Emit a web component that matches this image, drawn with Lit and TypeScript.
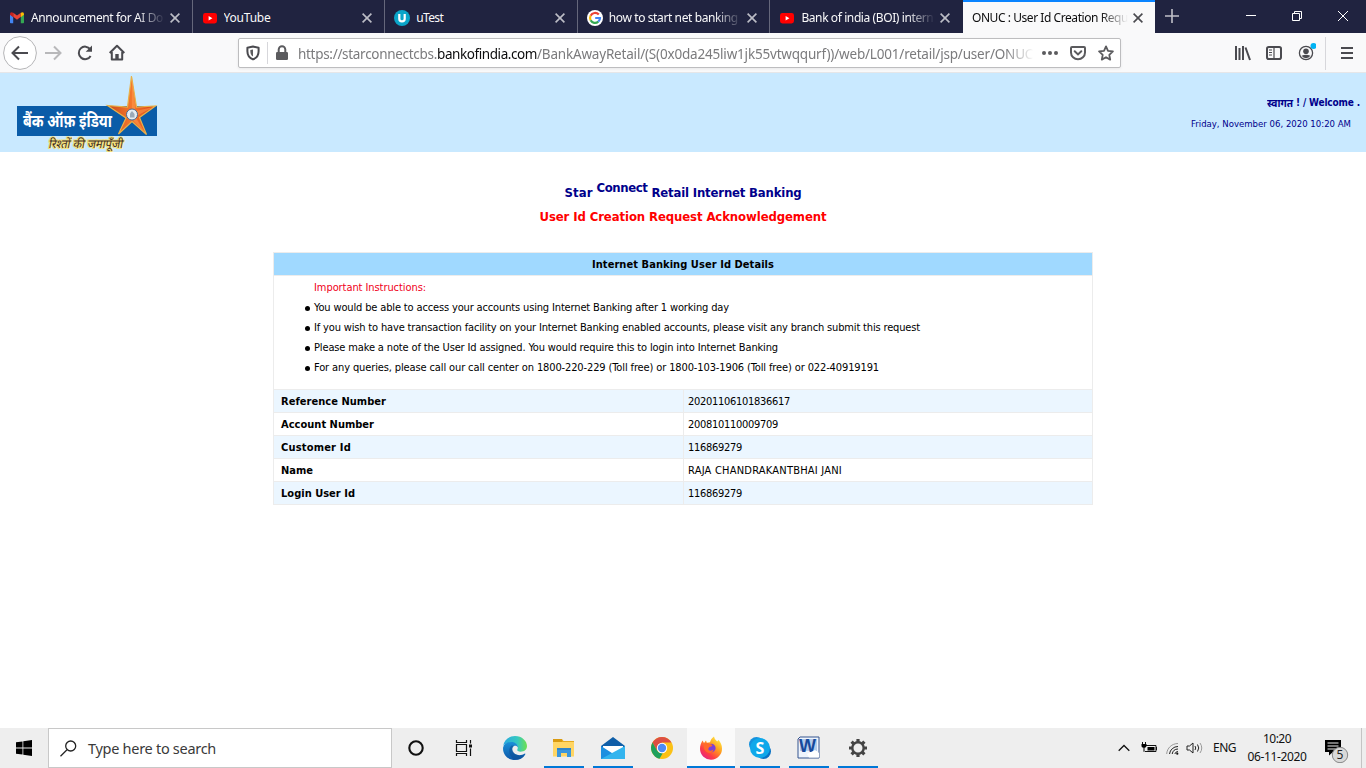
import { LitElement, html, svg, css } from "lit";
import { customElement, property } from "lit/decorators.js";
import { classMap } from "lit/directives/class-map.js";

/** One line of text, tracked so that it fills the given width. */
@customElement("fit-text")
class FitText extends LitElement {
  @property() text = "";
  @property({ type: Number }) w = 0;
  static styles = css`
    :host { display: block; white-space: pre; flex: none; }
    span { display: inline-block; }
  `;
  render() {
    return html`<span>${this.text}</span>`;
  }
  updated() {
    const s = this.renderRoot.querySelector("span") as HTMLElement;
    s.style.letterSpacing = "0px";
    const natural = s.getBoundingClientRect().width;
    const n = Math.max(1, this.text.length);
    s.style.letterSpacing = `${(this.w - natural) / n}px`;
  }
}

const fit = (text: string, w: number, cls = "") =>
  html`<fit-text class=${cls} .text=${text} .w=${w}></fit-text>`;

const youtube = svg`<rect x="1" y="3" width="14" height="10.5" rx="2.4" fill="#f00"/><path d="M6.6 6v4.6l3.8-2.3z" fill="#fff"/>`;
const gmail = svg`<path d="M1 13.2V4.4l3.2 2.4v6.4H1.8q-.8 0-.8-.8z" fill="#4285f4"/><path d="M11.8 13.2V6.8L15 4.4v8q0 .8-.8.8z" fill="#34a853"/><path d="M4.2 6.8v-4L8 5.6l3.8-2.8v4L8 9.8z" fill="#ea4335"/><path d="M11.8 2.8q3.2-1.6 3.2 1.4v.6l-3.2 2.4z" fill="#fbbc04"/><path d="M4.2 2.8Q1 1.2 1 4.2v.6l3.2 2.4z" fill="#c5221f"/>`;
const utest = svg`<circle cx="8" cy="8" r="8" fill="#0ba5c9"/><path d="M5.3 4v4.7a2.7 2.7 0 0 0 5.4 0V4" fill="none" stroke="#fff" stroke-width="2.2"/>`;
const google = svg`<circle cx="8" cy="8" r="8" fill="#fff"/><g fill="none" stroke-width="2.2"><path d="M11.8 4.6A5 5 0 0 0 3.6 5.7" stroke="#ea4335"/><path d="M3.6 5.7a5 5 0 0 0 0 4.6" stroke="#fbbc05"/><path d="M3.6 10.3a5 5 0 0 0 7.7 1.4" stroke="#34a853"/><path d="M11.3 11.7A5 5 0 0 0 13 8H8.2" stroke="#4285f4"/></g>`;

const tabs = [
  { t: "Announcement for AI Do", w: 132, icon: gmail, fade: true },
  { t: "YouTube", w: 47, icon: youtube },
  { t: "uTest", w: 27, icon: utest },
  { t: "how to start net banking", w: 129, icon: google, fade: true },
  { t: "Bank of india (BOI) intern", w: 132, icon: youtube, fade: true },
  { t: "ONUC : User Id Creation Requ", w: 156, active: true, fade: true },
];

@customElement("browser-tabs")
class BrowserTabs extends LitElement {
  static styles = css`
    :host { display: flex; height: 33px; background: #202340; color: #f9f9fa; font: 12px/16px "Noto Sans", "Open Sans", sans-serif; }
    .tab { box-sizing: border-box; display: flex; align-items: center; width: 192.6px; padding: 2px 9px 0 9px; border-right: 1px solid #65677b; }
    .tab.pre { border-right-color: #202340; }
    .tab.active { width: 192px; background: #f9f9fa; color: #0c0c0d; border: 0; box-shadow: inset 0 2px #0a84ff; }
    .ico { width: 16px; height: 16px; margin-right: 6px; flex: none; }
    .label { flex: 1; min-width: 0; overflow: hidden; }
    .fade { -webkit-mask-image: linear-gradient(to left, transparent 2px, #000 30px); mask-image: linear-gradient(to left, transparent 2px, #000 30px); }
    .x { width: 10px; height: 10px; margin: 0 3px 0 3px; flex: none; stroke: #bcbdc6; stroke-width: 1.6; }
    .active .x { stroke: #4a4a4f; }
    .plus { width: 14px; height: 14px; margin: 9px 0 0 10px; stroke: #c0c0c8; stroke-width: 1.6; }
    .win { display: flex; margin-left: auto; padding: 10px 17px 0 0; gap: 34px; }
    .win svg { width: 12px; height: 12px; fill: none; stroke: #fff; stroke-width: 1; }
  `;
  render() {
    return html`
      ${tabs.map((t, i) => html`<div class=${classMap({ tab: true, active: !!t.active, pre: i === 4 })}>
        ${t.icon ? html`<svg class="ico" viewBox="0 0 16 16">${t.icon}</svg>` : ""}
        <div class=${classMap({ label: true, fade: !!t.fade })}>${fit(t.t, t.w)}</div>
        <svg class="x" viewBox="0 0 10 10"><path d="M.6 .6l8.8 8.8M9.4 .6L.6 9.4"/></svg>
      </div>`)}
      <svg class="plus" viewBox="0 0 14 14"><path d="M7 0v14M0 7h14"/></svg>
      <div class="win">
        <svg viewBox="0 0 12 12"><path d="M1 5.5h10"/></svg>
        <svg viewBox="0 0 12 12"><path d="M1.5 3.5h7v7h-7zM3.5 3.5v-2h7v7h-2"/></svg>
        <svg viewBox="0 0 12 12"><path d="M1 1l10 10M11 1L1 11"/></svg>
      </div>`;
  }
}

@customElement("browser-toolbar")
class BrowserToolbar extends LitElement {
  static styles = css`
    :host { box-sizing: border-box; display: flex; align-items: flex-start; height: 40px; background: #f9f9fa; border-bottom: 1px solid #e6e6e8; }
    svg { flex: none; fill: none; stroke: #4a4a4f; stroke-width: 2; display: block; }
    .nav { display: flex; padding: 3px 0 0 3px; width: 235px; }
    .url { box-sizing: border-box; display: flex; align-items: center; width: 883px; height: 30px; margin-top: 5px; border: 1px solid #bdbdbf; border-radius: 2px; background: #fff; box-shadow: 0 1px 3px #0001; color: #7b7b7d; font: 13.5px/20px "Noto Sans", "Open Sans", sans-serif; padding-left: 6px; }
    .sep { width: 1px; height: 22px; background: #d7d7db; margin: 0 6px; }
    .addr { display: flex; width: 743px; margin: 1px 0 0 8px; overflow: hidden; -webkit-mask-image: linear-gradient(to left, transparent 7px, #000 36px); mask-image: linear-gradient(to left, transparent 7px, #000 36px); }
    .dom { color: #0c0c0d; }
    .acts { display: flex; gap: 12px; margin-left: 1px; }
    .tools { display: flex; align-items: center; height: 40px; margin-left: 112px; }
    .bar { width: 1px; height: 33px; background: #d7d7db; margin: 0 13px 0 9px; }
    .gap { margin-left: 14px; }
    .gap2 { margin-left: 15px; }
  `;
  render() {
    return html`
      <div class="nav">
        <svg width="34" height="34" viewBox="0 0 34 34"><circle cx="17" cy="17" r="16.4" fill="#fff" stroke="#b5b5b7" stroke-width="1"/><path d="M25 17H10M16 10.5L9.5 17l6.5 6.5"/></svg>
        <svg width="32" height="34" viewBox="0 0 32 34"><path d="M8 17h15M17 10.5l6.5 6.5-6.5 6.5" stroke="#b8b8ba"/></svg>
        <svg width="32" height="34" viewBox="0 0 32 34"><path d="M21.2 13.2A6.3 6.3 0 1 0 21.6 20"/><path d="M23 9.5v6.3h-6.3z" fill="#4a4a4f" stroke="none"/></svg>
        <svg width="32" height="34" viewBox="0 0 32 34"><path d="M8.700 17L16 9.800l7.300 7.200M10.800 16v7.600h10.400V16" stroke-linejoin="round"/><path d="M14.300 24v-6h3.400v6z" fill="#4a4a4f" stroke="none"/></svg>
      </div>
      <div class="url">
        <svg width="16" height="16" viewBox="0 0 16 16" stroke="#5b5b5e"><path d="M8 1.6l5.6 1.2v3.4c0 4-1.6 6.6-5.6 8.2-4-1.6-5.600-4.200-5.600-8.200V2.800z" stroke-linejoin="round"/><path d="M8 4.500v7C5.800 10.200 5.300 8.500 5.300 5z" fill="#5b5b5e" stroke="none"/></svg>
        <div class="sep"></div>
        <svg width="16" height="16" viewBox="0 0 16 16"><path d="M4.700 7V4.600a3.300 3.300 0 0 1 6.600 0V7" stroke="#5b5b5e"/><rect x="2" y="7" width="12" height="8" rx="1.300" fill="#5b5b5e" stroke="none"/></svg>
        <div class="addr">
          ${fit("https://starconnectcbs.", 139)}${fit("bankofindia.com", 100, "dom")}${fit("/BankAwayRetail/(S(0x0da245liw1jk55vtwqqurf))/web/L001/retail/jsp/user/ONUCF", 503)}
        </div>
        <div class="acts">
          <svg width="16" height="16" viewBox="0 0 16 16"><g fill="#5b5b5e" stroke="none"><circle cx="2" cy="8" r="2"/><circle cx="8" cy="8" r="2"/><circle cx="14" cy="8" r="2"/></g></svg>
          <svg width="16" height="16" viewBox="0 0 16 16"><path d="M2 2h12q1 0 1 1v4.500a7 6.800 0 0 1-14 0V3q0-1 1-1z" stroke="#5b5b5e"/><path d="M4.700 6.300L8 9.400l3.300-3.100" stroke="#5b5b5e" stroke-linecap="round"/></svg>
          <svg width="16" height="16" viewBox="0 0 16 16"><path d="M8 1.400l2 4.400 4.900.6-3.600 3.400.9 4.800L8 12.200l-4.200 2.400.9-4.800L1.100 6.400 6 5.800z" stroke="#5b5b5e" stroke-width="1.800" stroke-linejoin="round"/></svg>
        </div>
      </div>
      <div class="tools">
        <svg width="18" height="16" viewBox="0 0 18 16"><path d="M3 1v14M6.500 3v12M10 1v14M12.500 2.500L17 15"/></svg>
        <svg class="gap2" width="16" height="16" viewBox="0 0 16 16"><rect x="1" y="2" width="14" height="12" rx="1.800"/><path d="M8 2v12M3 5h3M3 7.500h3M3 10h3" stroke-width="1.200"/></svg>
        <svg class="gap" width="20" height="22" viewBox="0 0 20 22"><circle cx="10" cy="11" r="6.600" stroke-width="1.300"/><circle cx="10" cy="9.200" r="2.800" fill="#4a4a4f" stroke="none"/><path d="M5.600 13.800q4.400-2 8.800 0-1.500 2.400-4.400 2.400t-4.400-2.400z" fill="#4a4a4f" stroke="none"/><circle cx="17.500" cy="4" r="3" fill="#00b3f4" stroke="none"/></svg>
        <div class="bar"></div>
        <svg width="16" height="16" viewBox="0 0 16 16"><path d="M2 3h12M2 8h12M2 13h12"/></svg>
      </div>`;
  }
}

@customElement("bank-page")
class BankPage extends LitElement {
  static styles = css`
    :host { display: block; height: 655px; background: #fff; font: 11px/20px "DejaVu Sans Condensed", "DejaVu Sans", sans-serif; font-stretch: condensed; color: #000; }
    .head { display: flex; justify-content: space-between; height: 79px; background: #c9e9ff; color: #00008b; }
    .logo { display: block; width: 160px; height: 79px; }
    .brand { font: bold 17px "Noto Sans", "Noto Sans Devanagari", sans-serif; fill: #fff; }
    .tag { font: italic 12px "Noto Sans", "Noto Sans Devanagari", sans-serif; fill: #3b2b28; stroke: #f5e27a; stroke-width: 2px; paint-order: stroke; }
    .right { display: flex; flex-direction: column; align-items: flex-end; padding-top: 20px; }
    .hi { display: flex; font-weight: bold; font-size: 10px; padding-right: 6px; white-space: pre; }
    .hindi { display: block; width: 29px; height: 20px; }
    .hindi text { font: bold 11px "Noto Sans", sans-serif; fill: #00008b; }
    .date { font-size: 9.5px; padding: 1px 15px 0 0; }
    .title { display: flex; justify-content: center; font-size: 13px; font-weight: bold; color: #00008b; padding-top: 31px; line-height: 20px; }
    .sup { margin: -5px 4px 5px; }
    .sub { display: flex; justify-content: center; font-size: 13px; font-weight: bold; color: #f00; padding-top: 4px; }
    .table { box-sizing: border-box; width: 820px; margin: 25px auto 0; border: 1px solid #ececec; }
    .cap { display: flex; justify-content: center; height: 22px; line-height: 24px; background: #a0d9ff; font-weight: bold; border-bottom: 1px solid #ececec; }
    .notes { height: 113px; padding-left: 40px; padding-top: 2px; box-sizing: border-box; }
    .imp { color: #f00020; }
    .note { display: flex; }
    .dot { width: 5px; height: 5px; border-radius: 50%; background: #000; margin: 8px 4px 0 -9px; }
    .row { display: flex; height: 22px; line-height: 24px; border-top: 1px solid #ececec; }
    .row.alt { background: #ebf6ff; }
    .k { box-sizing: border-box; width: 410px; padding-left: 7px; border-right: 1px solid #ececec; font-weight: bold; }
    .v { padding-left: 4px; }
  `;
  render() {
    const notes: [string, number][] = [
      ["You would be able to access your accounts using Internet Banking after 1 working day", 415],
      ["If you wish to have transaction facility on your Internet Banking enabled accounts, please visit any branch submit this request", 606],
      ["Please make a note of the User Id assigned. You would require this to login into Internet Banking", 464],
      ["For any queries, please call our call center on 1800-220-229 (Toll free) or 1800-103-1906 (Toll free) or 022-40919191", 565],
    ];
    const rows: [string, number, string, number][] = [
      ["Reference Number", 105, "20201106101836617", 102],
      ["Account Number", 93, "200810110009709", 90],
      ["Customer Id", 70, "116869279", 54],
      ["Name", 32, "RAJA CHANDRAKANTBHAI JANI", 154],
      ["Login User Id", 74, "116869279", 54],
    ];
    return html`
      <div class="head">
        <svg class="logo" viewBox="0 0 160 79">
          <defs><linearGradient id="o" x1="0" x2="1"><stop offset="0" stop-color="#c94a1c"/><stop offset=".5" stop-color="#f5772c"/><stop offset="1" stop-color="#d84315"/></linearGradient></defs>
          <rect x="17" y="33" width="140" height="30" fill="#0a5ca8"/>
          <path d="M131.500 3l5 31 19-1-16 11.500 7 17-14.500-13L118.500 61l7.500-16L107.500 32.500l20 1.500z" fill="url(#o)" stroke="#e8b24a" stroke-width="1.200"/>
          <path d="M132 5l3.500 30-3.500 5zM155 33.500l-18 9-3-4zM146 61l-10-16-3 2z" fill="#ff9a4d" opacity=".55"/>
          <circle cx="132" cy="41.500" r="5.500" fill="#e6edf3" stroke="#466b92"/><path d="M130 44.500v-4l2-2.500 2.500 3v3.500z" fill="#9aa9b8"/>
          <text class="brand" x="23" y="54" textLength="89" lengthAdjust="spacingAndGlyphs">बैंक ऑफ़ इंडिया</text>
          <text class="tag" x="48" y="75.500" textLength="74" lengthAdjust="spacingAndGlyphs" transform="translate(15 0) skewX(-11)">रिश्तों की जमापूँजी</text>
        </svg>
        <div class="right">
          <div class="hi"><svg class="hindi" viewBox="0 0 29 20"><text x="0" y="13.500" textLength="26" lengthAdjust="spacingAndGlyphs">स्वागत</text></svg>${fit("! / Welcome .", 64)}</div>
          ${fit("Friday, November 06, 2020 10:20 AM", 160, "date")}
        </div>
      </div>
      <div class="title">${fit("Star", 28)}${fit("Connect", 51, "sup")}${fit("Retail Internet Banking", 150)}</div>
      <div class="sub">${fit("User Id Creation Request Acknowledgement", 287)}</div>
      <div class="table">
        <div class="cap">${fit("Internet Banking User Id Details", 182)}</div>
        <div class="notes">
          ${fit("Important Instructions:", 112, "imp")}
          ${notes.map(([t, w]) => html`<div class="note"><div class="dot"></div>${fit(t, w)}</div>`)}
        </div>
        ${rows.map(([k, kw, v, vw], i) => html`<div class=${classMap({ row: true, alt: i % 2 === 0 })}>
          <div class="k">${fit(k, kw)}</div><div class="v">${fit(v, vw)}</div>
        </div>`)}
      </div>`;
  }
}

const edge = svg`<defs><linearGradient id="ea" x1="0" x2="1"><stop offset="0" stop-color="#2aa8e0"/><stop offset=".6" stop-color="#35c8c0"/><stop offset="1" stop-color="#6ee04f"/></linearGradient><linearGradient id="eb" x1="0" y1="0" x2="0" y2="1"><stop offset="0" stop-color="#1b90d8"/><stop offset="1" stop-color="#0c57a8"/></linearGradient></defs>
<path d="M.2 10C1 4 6 0 12 0c7 0 12 5 12 10 0 3.800-3 5.700-6.300 5.700-3.400 0-4-1.300-3.200-2.500C15.800 10 13 7 9.500 7 5 7 1.200 8 .2 10z" fill="url(#ea)"/><path d="M.1 11.500C.8 8 4.500 6 8.500 6c3.800 0 6.500 2.500 6.500 5.500-1-1.700-2.500-2.300-4-1.500C8 11.500 8.500 16 12 18c3.500 2 7.500 1 9.500-.3.700-.3 1 .2.700.7C20 22 16.500 24 12 24 5 24-.6 18.500.1 11.500z" fill="url(#eb)"/><path d="M8.500 9.500C4.500 13 6 20.500 11 23c4.500 1.500 9-1 11-4.500-3 1.500-8 1.500-10.700-1.300C8.800 14.600 9 11.500 11 9.800z" fill="#0f4f94" opacity=".55"/>`;
const folder = svg`<path d="M1 3h9l1.500 2H22v15H1z" fill="#e5a91f"/><path d="M1 3h9v3H1z" fill="#d99a10"/><path d="M1 6h21v14.500H1z" fill="#ffd563"/><path d="M5 12h14v9h-4v-4H9v4H5z" fill="#3a96dd"/><path d="M5 12h14v2H5z" fill="#2f84c8"/>`;
const mail = svg`<path d="M0 10L12 1l12 9v3H0z" fill="#0f5ea8"/><path d="M2 10h20v5l-10 5-10-5z" fill="#fff"/><path d="M0 10l14 9 10 4H0z" fill="#1d8fe0"/><path d="M24 10L0 23h24z" fill="#33b4ee"/>`;
const chrome = svg`<circle cx="12" cy="12" r="11" fill="#fbc116"/><path d="M12 12L2.500 6.500A11 11 0 0 1 21.500 6.500H12z" fill="#dd4f43"/><path d="M2.500 6.500l4.700 8.200L12 12V6.500z" fill="#dd4f43"/><path d="M2.500 6.500l4.700 8.200q2 3 5.500 2.500L9.500 22.700A11 11 0 0 1 2.500 6.500z" fill="#1fa05c"/><circle cx="12" cy="12" r="5.200" fill="#fff"/><circle cx="12" cy="12" r="4.200" fill="#4c8bf5"/>`;
const firefox = svg`<defs><linearGradient id="fa" x1="1" y1="0" x2=".2" y2="1"><stop offset=".1" stop-color="#fff044"/><stop offset=".45" stop-color="#ff9a1f"/><stop offset=".75" stop-color="#ff3d45"/><stop offset="1" stop-color="#e0218a"/></linearGradient></defs><path d="M3.500 4.500L5 7l2-2.500.8 2.200 3.200-.4C11.500 4 13 2 15 .5c.5 2.500 2 3.500 3.200 5l1.300-1.500c2 2 3.500 5 3.500 8.500A11 11 0 0 1 1 13c0-3.500 1-6 2.500-8.500z" fill="url(#fa)"/><circle cx="12.300" cy="12" r="4.300" fill="#7d3fd8"/><path d="M5 8q3-2 6 0 2 .3 2.500 1.300-.6 1.400-3 1.700Q8.700 12.500 9.500 14q2.500 1.500 5-.5c-.5 2.500-2 3.500-4 3.500-3.500 0-6.500-3.500-5.500-9z" fill="#ff6a2b"/>`;
const skype = svg`<circle cx="8.500" cy="8.500" r="7.500" fill="#1591dd"/><circle cx="15.500" cy="15.500" r="7.500" fill="#0a72c4"/><circle cx="12" cy="12" r="10" fill="#0fa8ea"/><text class="sk" x="12" y="17.500" text-anchor="middle">S</text>`;
const word = svg`<path d="M3 1h19v21H1V3z" fill="#eef4fc" stroke="#34548f"/><path d="M3 3h17v12H3z" fill="#b5cdec"/><text class="wd" x="10.500" y="16" text-anchor="middle">W</text><path d="M10 18l8-4 4 3v4.500H12z" fill="#fff"/>`;
const gear = svg`<circle cx="12" cy="12" r="5.700" fill="none" stroke="#444" stroke-width="2.400"/><g stroke="#444" stroke-width="3.200"><path d="M12 3v3M12 18v3M3 12h3M18 12h3M5.600 5.600l2.200 2.200M16.200 16.200l2.200 2.200M5.600 18.400l2.200-2.200M16.200 7.800l2.200-2.200"/></g>`;

@customElement("task-bar")
class TaskBar extends LitElement {
  static styles = css`
    :host { display: flex; height: 40px; background: #eee; font: 12px/18px "Noto Sans", "Open Sans", sans-serif; color: #111; }
    svg { display: block; flex: none; }
    .cell { width: 48px; height: 40px; display: flex; align-items: center; justify-content: center; flex: none; }
    .search { box-sizing: border-box; display: flex; align-items: center; width: 344px; height: 40px; border: 1px solid #c8c8c8; background: #fff; padding-left: 11px; font-size: 14.5px; color: #3a3a3a; gap: 11px; }
    .apps { display: flex; gap: 1px; margin-left: 3px; }
    .app { position: relative; }
    .app.on::after { content: ""; position: absolute; left: 4px; right: 4px; bottom: 0; height: 2px; background: #0078d7; }
    .app.cur { background: #fafafa; }
    .app.on.cur::after { left: 0; right: 0; }
    .sk { font: bold 16px "Open Sans", sans-serif; fill: #fff; }
    .wd { font: bold 18px "Liberation Sans", sans-serif; fill: #174a9c; }
    .tray { display: flex; align-items: center; margin-left: auto; }
    .wifi { margin: 0 7px 0 -3px; }
    .eng { margin-left: 9px; }
    .clock { display: flex; flex-direction: column; align-items: center; width: 60px; margin-left: 11px; padding-bottom: 1px; }
    .act { margin: 3px 0 0 17px; }
    .num { font: 12px "Noto Sans", sans-serif; fill: #222; }
    .end { width: 1px; height: 40px; background: #c4c4c4; margin: 0 4px 0 11px; }
  `;
  render() {
    const apps: [unknown, string][] = [
      [edge, ""], [folder, "on"], [mail, "on"], [chrome, ""], [firefox, "on cur"], [skype, "on"], [word, "on"], [gear, "on"],
    ];
    return html`
      <div class="cell"><svg width="16" height="16" viewBox="0 0 16 16"><path d="M0 2.300l6.500-.9v6.100H0zM7.300 1.300L16 0v7.500H7.300zM0 8.400h6.500v6.200L0 13.700zM7.300 8.400H16V16l-8.700-1.300z"/></svg></div>
      <div class="search"><svg width="17" height="17" viewBox="0 0 17 17" fill="none" stroke="#222" stroke-width="1.300"><circle cx="10.700" cy="6" r="5"/><path d="M7 9.700L.5 16.300"/></svg>${fit("Type here to search", 128)}</div>
      <div class="cell"><svg width="16" height="16" viewBox="0 0 16 16"><circle cx="8" cy="8" r="6.700" fill="none" stroke="#111" stroke-width="2.100"/></svg></div>
      <div class="cell"><svg width="18" height="16" viewBox="0 0 18 16" fill="none" stroke="#111" stroke-width="1.200"><path d="M1.500 0v2.500h10V0M1.500 4.500h10v7h-10zM1.500 16v-2.500h10V16M15.500 0v3.500M15.500 8.500V16"/><path d="M14 4.500h3v3h-3z" fill="#111" stroke="none"/></svg></div>
      <div class="apps">${apps.map(([icon, c]) => html`<div class="cell app ${c}"><svg width="24" height="24" viewBox="0 0 24 24">${icon}</svg></div>`)}</div>
      <div class="tray">
        <svg width="12" height="8" viewBox="0 0 12 8"><path d="M.7 6.800L6 1.500l5.300 5.300" fill="none" stroke="#111" stroke-width="1.300"/></svg>
        <svg width="38" height="16" viewBox="0 0 38 16"><g transform="translate(11 1)"><path d="M5 4.500h10v6H4M15.500 6v3" fill="none" stroke="#111"/><path d="M6.500 6h7v3.500h-7z"/><path d="M1.500 1v2.500M4.500 1v2.500" stroke="#111"/><path d="M.5 3h5v2.300q-1 1.500-2 1.500v4H2.500v-4q-2-.3-2-1.500z"/></g></svg>
        <svg class="wifi" width="14" height="16" viewBox="0 0 14 16" fill="none" stroke="#222"><path d="M4.500 14A8.500 8.500 0 0 1 13 6.500M7.200 14A6 6 0 0 1 13 9M9.800 14A3.500 3.500 0 0 1 13 11.500"/><path d="M1.700 14C2 8 7 3.500 13 3.500" stroke="#999"/><circle cx="12.300" cy="13.700" r="1.100" fill="#111" stroke="none"/></svg>
        <svg width="18" height="16" viewBox="0 0 18 16" fill="none" stroke="#222"><path d="M1 6h2.500L7 3v10L3.500 10H1z"/><path d="M9 6q1.500 2 0 4M11.500 4.500q2.500 3.500 0 7"/><path d="M14 3q3.500 5 0 10" stroke="#999"/></svg>
        ${fit("ENG", 23, "eng")}
        <div class="clock">${fit("10:20", 28)}${fit("06-11-2020", 59)}</div>
        <svg class="act" width="26" height="26" viewBox="0 0 26 26"><path d="M1 3h16v12H9l-4 3.500V15H1z"/><path d="M3.500 6h11M3.500 9h11M3.500 12h8" stroke="#eee"/><circle cx="16" cy="18" r="7.700" fill="#d9d9d9" stroke="#888"/><text class="num" x="16" y="22.300" text-anchor="middle">5</text></svg>
        <div class="end"></div>
      </div>`;
  }
}

@customElement("app-root")
class AppRoot extends LitElement {
  static styles = css`
    :host { display: flex; flex-direction: column; width: 1366px; height: 768px; overflow: hidden; background: #fff; }
    browser-tabs, browser-toolbar, bank-page, task-bar { flex: none; }
  `;
  render() {
    return html`<browser-tabs></browser-tabs><browser-toolbar></browser-toolbar><bank-page></bank-page><task-bar></task-bar>`;
  }
}
